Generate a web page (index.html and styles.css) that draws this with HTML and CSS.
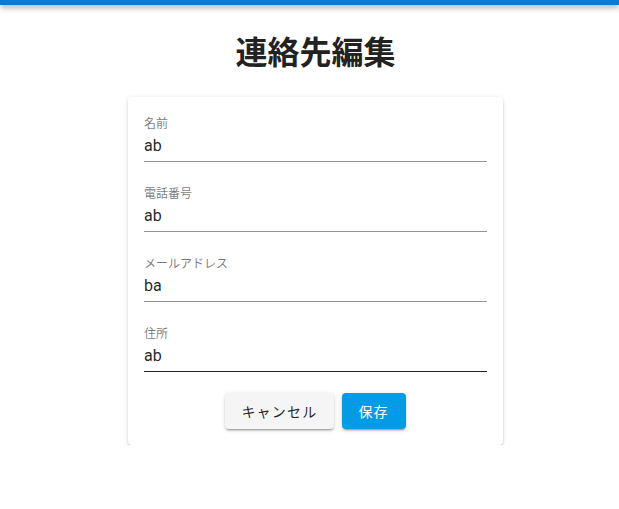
FILE: index.html
```html
<!DOCTYPE html>
<html lang="ja">
<head>
<meta charset="utf-8">
<title>連絡先編集</title>
<link rel="stylesheet" href="styles.css">
</head>
<body>
<header class="appbar"></header>
<main class="page">
  <h1 class="title">連絡先編集</h1>
  <form class="card">
    <label class="field">
      <span class="field-label">名前</span>
      <input class="field-input" type="text" value="ab">
    </label>
    <label class="field">
      <span class="field-label">電話番号</span>
      <input class="field-input" type="text" value="ab">
    </label>
    <label class="field">
      <span class="field-label">メールアドレス</span>
      <input class="field-input" type="text" value="ba">
    </label>
    <label class="field field-hover">
      <span class="field-label">住所</span>
      <input class="field-input" type="text" value="ab">
    </label>
    <div class="actions">
      <button type="button" class="btn btn-default">キャンセル</button>
      <button type="button" class="btn btn-primary">保存</button>
    </div>
  </form>
</main>
</body>
</html>
```
FILE: styles.css
```css
* { box-sizing: border-box; }
html, body { margin: 0; padding: 0; background: #fff; }
body {
  font-family: Roboto, "Noto Sans CJK JP", sans-serif;
  color: rgba(0,0,0,.87);
}
.appbar {
  height: 5px;
  background: #0a7bd0;
  box-shadow: 0 2px 4px -1px rgba(0,0,0,.2), 0 4px 5px 0 rgba(0,0,0,.14), 0 1px 10px 0 rgba(0,0,0,.12);
  position: relative;
  z-index: 1;
}
.page {
  padding: 28px 0 0 12px;
  display: flex;
  flex-direction: column;
  align-items: center;
}
.title {
  margin: 0 0 24px;
  font-size: 32px;
  line-height: 40px;
  font-weight: 700;
  color: #222;
}
.card {
  width: 375px;
  padding: 19px 16px 16px;
  background: #fff;
  border-radius: 4px;
  box-shadow: 0 3px 1px -2px rgba(0,0,0,.2), 0 2px 2px 0 rgba(0,0,0,.14), 0 1px 5px 0 rgba(0,0,0,.12);
  display: flex;
  flex-direction: column;
}
.field {
  display: flex;
  flex-direction: column;
  margin-bottom: 24px;
}
.field:last-of-type { margin-bottom: 21px; }
.field-label {
  font-size: 12px;
  line-height: 16px;
  color: rgba(0,0,0,.54);
}
.field-input {
  display: block;
  width: 100%;
  height: 30px;
  margin: 0;
  padding: 1px 0 4px;
  border: 0;
  border-bottom: 1px solid rgba(0,0,0,.42);
  outline: none;
  background: transparent;
  font-family: inherit;
  font-size: 16px;
  line-height: 24px;
  color: rgba(0,0,0,.87);
}
.field-hover .field-input { border-bottom-color: rgba(0,0,0,.87); }
.actions {
  display: flex;
  justify-content: center;
  gap: 8px;
}
.btn {
  height: 36px;
  min-width: 64px;
  padding: 0 16px;
  border: 0;
  border-radius: 4px;
  font-family: inherit;
  font-size: 14px;
  letter-spacing: 1.25px;
  cursor: pointer;
  box-shadow: 0 3px 1px -2px rgba(0,0,0,.2), 0 2px 2px 0 rgba(0,0,0,.14), 0 1px 5px 0 rgba(0,0,0,.12);
}
.btn-default { background: #f5f5f5; color: rgba(0,0,0,.87); }
.btn-primary { background: #039be5; color: #fff; }
```
